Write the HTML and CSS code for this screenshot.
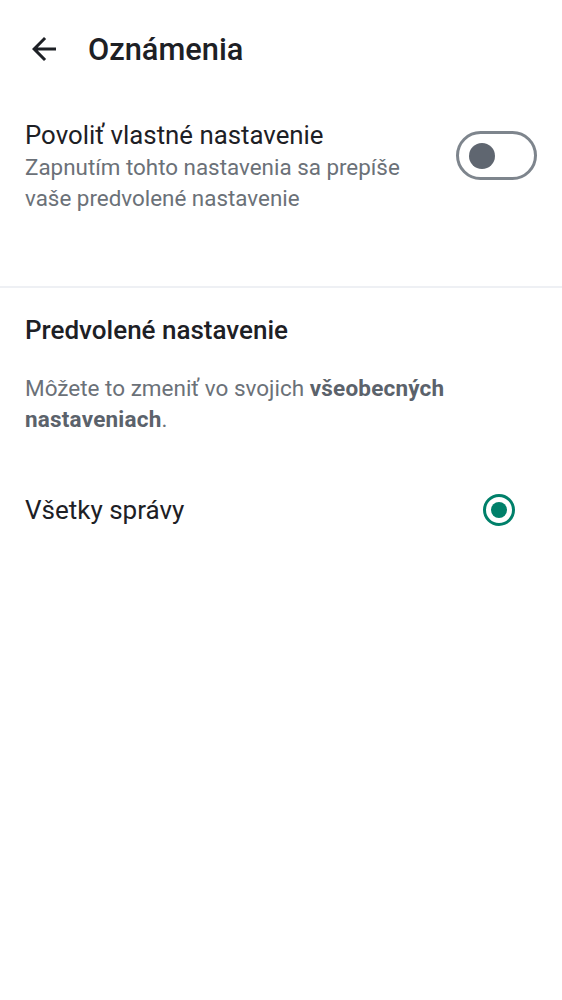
FILE: index.html
```html
<!DOCTYPE html>
<html lang="sk">
<head>
<meta charset="utf-8">
<title>Oznámenia</title>
<link rel="stylesheet" href="styles.css">
</head>
<body>
<header class="appbar">
  <button class="back" aria-label="Späť">
    <svg viewBox="0 0 24 24" width="36" height="36"><path d="M20 11H7.83l5.59-5.59L12 4l-8 8 8 8 1.41-1.41L7.83 13H20v-2z" fill="#1d2025"/></svg>
  </button>
  <h1 class="title">Oznámenia</h1>
</header>

<section class="setting">
  <div class="setting-text">
    <div class="setting-title">Povoliť vlastné nastavenie</div>
    <div class="setting-sub">Zapnutím tohto nastavenia sa prepíše vaše predvolené nastavenie</div>
  </div>
  <div class="switch"><span class="knob"></span></div>
</section>

<hr class="divider">

<section class="defaults">
  <h2 class="section-title">Predvolené nastavenie</h2>
  <p class="desc">Môžete to zmeniť vo svojich <b>všeobecných nastaveniach</b>.</p>
  <div class="option">
    <span class="option-label">Všetky správy</span>
    <span class="radio"><span class="dot"></span></span>
  </div>
</section>
</body>
</html>
```
FILE: styles.css
```css
* { box-sizing: border-box; }
body {
  margin: 0;
  background: #ffffff;
  font-family: Roboto, "Noto Sans", sans-serif;
  color: #1d2025;
}
.appbar {
  height: 98px;
  display: flex;
  align-items: center;
}
.back {
  border: 0;
  background: none;
  padding: 0;
  margin-left: 26px;
  width: 36px;
  height: 36px;
  display: flex;
}
.title {
  margin: 0 0 0 26px;
  font-size: 30.8px;
  font-weight: 500;
  color: #1d2025;
}
.setting {
  display: flex;
  align-items: flex-start;
  justify-content: space-between;
  padding: 21px 25px 72px 25px;
}
.setting-text { width: 405px; }
.setting-title {
  font-size: 25.8px;
  line-height: 32px;
  color: #1d2025;
  margin-bottom: 1px;
}
.setting-sub {
  font-size: 22.4px;
  line-height: 31px;
  color: #6b7178;
}
.switch {
  margin-top: 12px;
  width: 81px;
  height: 49px;
  border: 3px solid #7e858d;
  border-radius: 25px;
  display: flex;
  align-items: center;
  padding-left: 10px;
  flex-shrink: 0;
}
.knob {
  width: 26px;
  height: 26px;
  border-radius: 50%;
  background: #5f6670;
}
.divider {
  margin: 0;
  border: 0;
  height: 2px;
  background: #eef0f4;
}
.defaults { padding: 26px 25px 0 25px; }
.section-title {
  margin: 0;
  font-size: 26px;
  line-height: 32px;
  font-weight: 500;
  color: #1d2025;
}
.desc {
  margin: 27px 0 0 0;
  font-size: 22.5px;
  line-height: 31px;
  color: #6b7178;
}
.desc b { color: #5b626b; font-weight: 700; letter-spacing: 0.2px; }
.option {
  margin-top: 55px;
  display: flex;
  align-items: center;
  justify-content: space-between;
  padding-right: 22px;
  height: 40px;
}
.option-label {
  font-size: 26px;
  color: #1d2025;
}
.radio {
  width: 32px;
  height: 32px;
  border: 3px solid #00806a;
  border-radius: 50%;
  display: flex;
  align-items: center;
  justify-content: center;
}
.dot {
  width: 16px;
  height: 16px;
  border-radius: 50%;
  background: #00806a;
}
```
